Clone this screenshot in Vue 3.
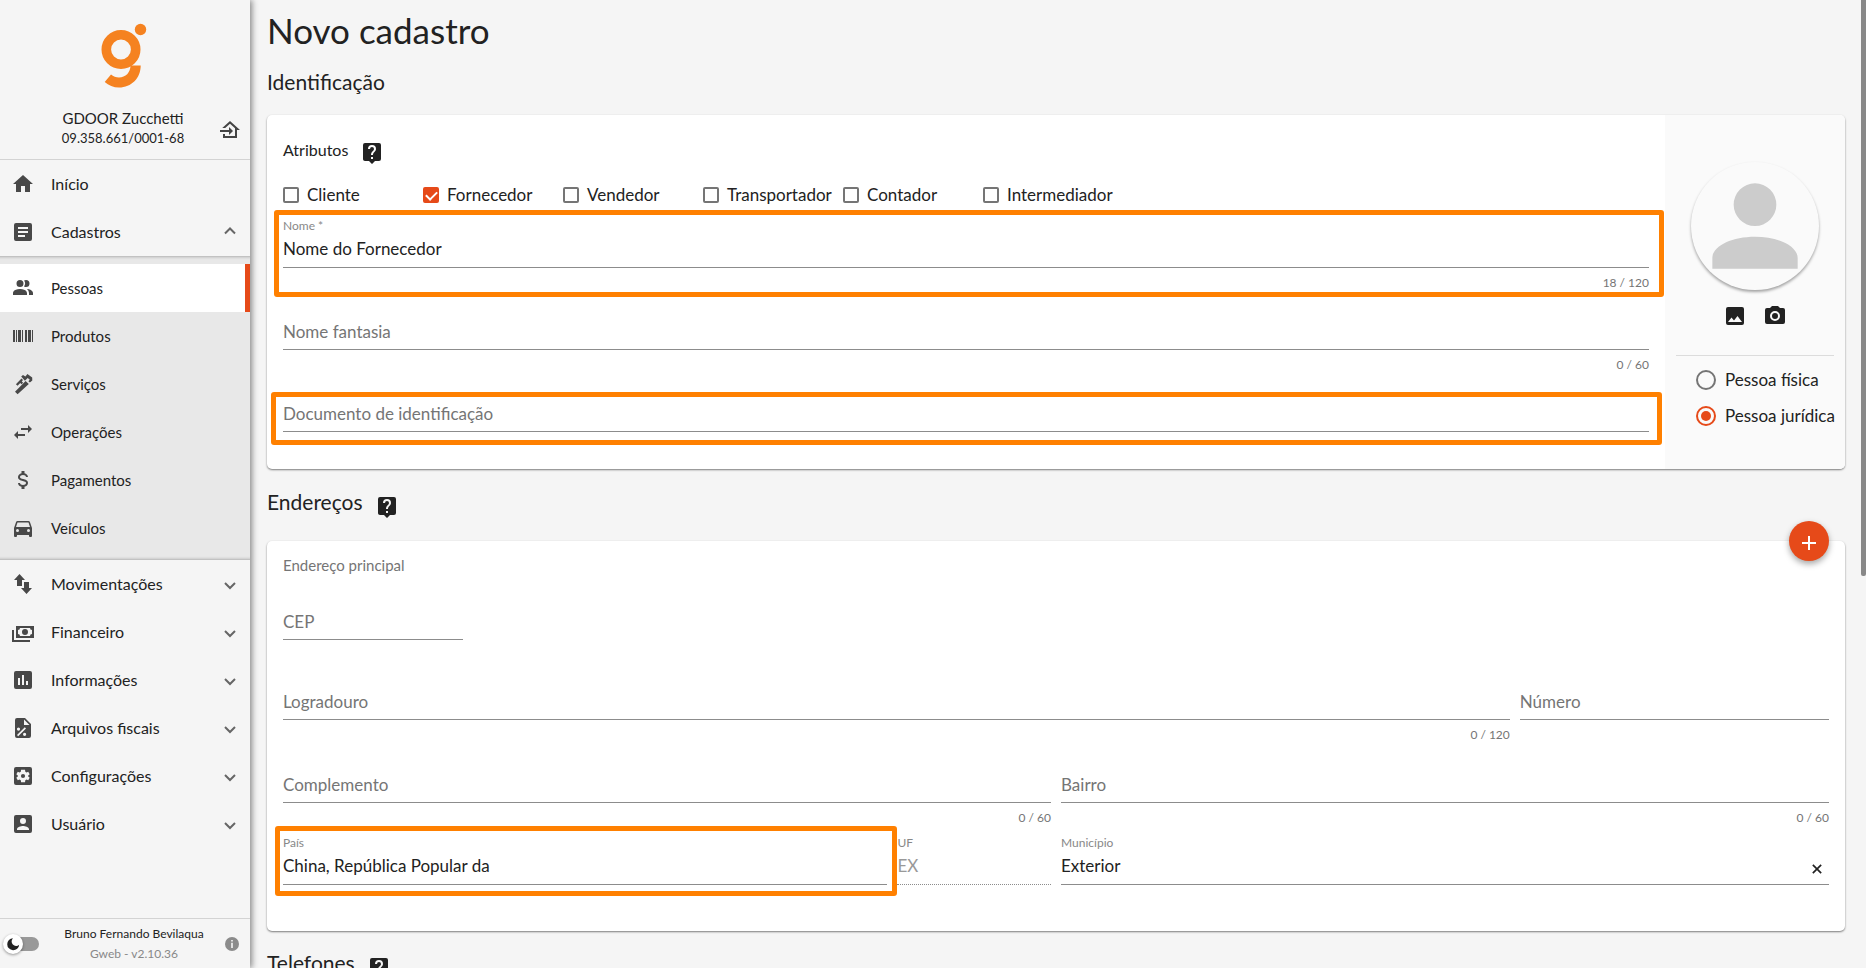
<script setup>
import { reactive, ref } from 'vue'

const box = 'M19 3H5a2 2 0 0 0-2 2v14a2 2 0 0 0 2 2h14a2 2 0 0 0 2-2V5a2 2 0 0 0-2-2z'

const icons = {
  home: 'M10 20v-6h4v6h5v-8h3L12 3 2 12h3v8z',
  text: box + 'M14 17H7v-2h7zM17 13H7v-2h10zM17 9H7V7h10z',
  people: 'M16 17v2H2v-2s0-4 7-4 7 4 7 4M12.5 7.5A3.5 3.5 0 1 0 9 11a3.5 3.5 0 0 0 3.5-3.5M15.94 13A5.32 5.32 0 0 1 18 17v2h4v-2s0-3.63-6.06-4M15 4a3.39 3.39 0 0 0-1.93.59 5 5 0 0 1 0 5.82A3.39 3.39 0 0 0 15 11a3.5 3.5 0 0 0 0-7z',
  barcode: 'M2 6h2v12H2zM5 6h1v12H5zM7 6h3v12H7zM11 6h1v12h-1zM14 6h2v12h-2zM17 6h3v12h-3zM21 6h1v12h-1z',
  wrench: 'M4 19.8 14.6 9l3.2 3.1L6.6 22.2zM4.9 12.2l5.6-5.6 1.5 1.5-1.2 1.3 1.3 1.3-1.6 1.6-1.3-1.3-2.6 2.7zM10.2 4.6l1.8-1.7 2.4 1.7 2-2.6 4.8 3.6.1 3-2.4 2-1.5-1.4 1.4-1.5-2.1-1.6-2.8 2.6z',
  swap: 'M21 9l-4-4v3h-7v2h7v3M7 11l-4 4 4 4v-3h7v-2H7z',
  dollar: 'M7 15h2c0 1.08 1.37 2 3 2s3-.92 3-2c0-1.1-1.04-1.5-3.24-2.03C9.64 12.44 7 11.78 7 9c0-1.79 1.47-3.31 3.5-3.82V3h3v2.18C15.53 5.69 17 7.21 17 9h-2c0-1.08-1.37-2-3-2s-3 .92-3 2c0 1.1 1.04 1.5 3.24 2.03C14.36 11.56 17 12.22 17 15c0 1.79-1.47 3.31-3.5 3.82V21h-3v-2.18C8.47 18.31 7 16.79 7 15z',
  car: 'M5 11l1.5-4.5h11L19 11M17.5 16a1.5 1.5 0 1 1 0-3 1.5 1.5 0 0 1 0 3M6.5 16a1.5 1.5 0 1 1 0-3 1.5 1.5 0 0 1 0 3M18.92 6A1.5 1.5 0 0 0 17.5 5h-11A1.5 1.5 0 0 0 5.08 6L3 12v8a1 1 0 0 0 1 1h1a1 1 0 0 0 1-1v-1h12v1a1 1 0 0 0 1 1h1a1 1 0 0 0 1-1v-8z',
  updown: 'M8.5 2 3 8h3v6h5V8h3zM15.5 22l5.5-6h-3v-6h-5v6h-3z',
  cash: 'M5 6h18v12H5V6M14 9a3 3 0 1 1 0 6 3 3 0 0 1 0-6M9 8a2 2 0 0 1-2 2v4a2 2 0 0 1 2 2h10a2 2 0 0 1 2-2v-4a2 2 0 0 1-2-2H9M1 10h2v10h16v2H1z',
  chart: box + 'M9 17H7v-7h2zM13 17h-2V7h2zM17 17h-2v-4h2z',
  percent: 'M14 2l6 6v12a2 2 0 0 1-2 2H6a2 2 0 0 1-2-2V4a2 2 0 0 1 2-2h8M13 9h5.5L13 3.5zM7.5 11.5a1.6 1.6 0 1 0 0 3.2 1.6 1.6 0 0 0 0-3.2M13.6 16.7a1.6 1.6 0 1 0 0 3.2 1.6 1.6 0 0 0 0-3.2M13.8 11.2l1.2 1.2-7.8 7.8L6 19z',
  cog: box + 'M17.2 12.6l1.5 1.1-1.5 2.6-1.7-.7-1.2.7-.3 1.9h-3.9l-.3-1.9-1.2-.7-1.8.7-1.5-2.6 1.5-1.1v-1.2l-1.5-1.1 1.5-2.6 1.8.7 1.2-.7.3-1.9H14l.3 1.9 1.2.7 1.7-.7 1.5 2.6-1.5 1.1zM12 9.9a2.1 2.1 0 1 0 0 4.2 2.1 2.1 0 0 0 0-4.2',
  user: 'M6 17c0-2 4-3.1 6-3.1s6 1.1 6 3.1v1H6M15 9a3 3 0 1 1-6 0 3 3 0 0 1 6 0M3 5v14a2 2 0 0 0 2 2h14a2 2 0 0 0 2-2V5a2 2 0 0 0-2-2H5a2 2 0 0 0-2 2z',
  enter: 'M15 13l-4-4v3H2v2h9v3M5 20v-4h2v2h10v-7.81l-5-4.5L7.21 10H4.22L12 3l10 9h-3v8z',
  help: 'M19 2H5a2 2 0 0 0-2 2v14c0 1.1.89 2 2 2h4l3 3 3-3h4a2 2 0 0 0 2-2V4a2 2 0 0 0-2-2zm-6 16h-2v-2h2v2zm2.07-7.75l-.9.92C13.45 11.9 13 12.5 13 14h-2v-.5c0-1.1.45-2.1 1.17-2.83l1.24-1.26c.37-.36.59-.86.59-1.41a2 2 0 1 0-4 0H8a4 4 0 1 1 8 0c0 .88-.36 1.68-.93 2.25z',
  person: 'M12 4a4 4 0 1 1 0 8 4 4 0 0 1 0-8M12 14c4.42 0 8 1.79 8 4v2H4v-2c0-2.21 3.58-4 8-4z',
  image: 'M8.5 13.5l2.5 3 3.5-4.5 4.5 6H5M21 19V5a2 2 0 0 0-2-2H5a2 2 0 0 0-2 2v14a2 2 0 0 0 2 2h14a2 2 0 0 0 2-2z',
  camera: 'M4 4h3l2-2h6l2 2h3a2 2 0 0 1 2 2v12a2 2 0 0 1-2 2H4a2 2 0 0 1-2-2V6a2 2 0 0 1 2-2M12 7a5 5 0 1 0 0 10 5 5 0 0 0 0-10M12 9a3 3 0 1 1 0 6 3 3 0 0 1 0-6z'
}

const top = [
  { label: 'Início', icon: 'home' },
  { label: 'Cadastros', icon: 'text', chevron: 'up' }
]
const sub = [
  { label: 'Pessoas', icon: 'people', active: true },
  { label: 'Produtos', icon: 'barcode' },
  { label: 'Serviços', icon: 'wrench' },
  { label: 'Operações', icon: 'swap' },
  { label: 'Pagamentos', icon: 'dollar' },
  { label: 'Veículos', icon: 'car' }
]
const bottom = [
  { label: 'Movimentações', icon: 'updown' },
  { label: 'Financeiro', icon: 'cash' },
  { label: 'Informações', icon: 'chart' },
  { label: 'Arquivos fiscais', icon: 'percent' },
  { label: 'Configurações', icon: 'cog' },
  { label: 'Usuário', icon: 'user' }
]

const attributes = reactive([
  { label: 'Cliente', on: false },
  { label: 'Fornecedor', on: true },
  { label: 'Vendedor', on: false },
  { label: 'Transportador', on: false },
  { label: 'Contador', on: false },
  { label: 'Intermediador', on: false }
])

const form = reactive({
  nome: 'Nome do Fornecedor',
  fantasia: '',
  documento: '',
  cep: '',
  logradouro: '',
  numero: '',
  complemento: '',
  bairro: '',
  pais: 'China, República Popular da',
  uf: 'EX',
  municipio: 'Exterior'
})
const kind = ref('juridica')
const dark = ref(false)
</script>

<template>
  <div class="app">
    <aside class="sidebar">
      <header class="company">
        <svg class="logo" viewBox="0 0 46 66" aria-hidden="true">
          <circle cx="20" cy="26.500" r="14.700" fill="none" stroke="#f58220" stroke-width="9.600" />
          <circle cx="39.500" cy="6.500" r="5.700" fill="#f58220" />
          <path d="M29.500 42.500H39.700C39.700 55 30.500 64.500 18 64.500c-5.500 0-10.500-2-14.300-5.500l6.300-7.500c2.300 2 5 3 8 3 6.500 0 11.500-5 11.500-12z" fill="#f58220" />
        </svg>
        <div class="company-row">
          <div class="company-text">
            <div class="company-name">GDOOR Zucchetti</div>
            <div class="company-id">09.358.661/0001-68</div>
          </div>
          <button class="icon-btn exit" type="button" aria-label="Trocar empresa">
            <svg class="icon" viewBox="0 0 24 24"><path :d="icons.enter" /></svg>
          </button>
        </div>
      </header>

      <nav class="menu">
        <a v-for="i in top" :key="i.label" class="item" href="#">
          <svg class="icon" viewBox="0 0 24 24"><path :d="icons[i.icon]" fill-rule="evenodd" /></svg>
          <span>{{ i.label }}</span>
          <svg v-if="i.chevron" class="chevron" viewBox="0 0 12 12"><path d="M1 7.500l5-5 5 5" /></svg>
        </a>
        <div class="submenu">
          <a v-for="i in sub" :key="i.label" class="item" :class="{ active: i.active }" href="#">
            <svg class="icon" viewBox="0 0 24 24"><path :d="icons[i.icon]" :fill-rule="i.icon === 'wrench' ? 'nonzero' : 'evenodd'" /></svg>
            <span>{{ i.label }}</span>
          </a>
        </div>
        <a v-for="i in bottom" :key="i.label" class="item" href="#">
          <svg class="icon" viewBox="0 0 24 24"><path :d="icons[i.icon]" fill-rule="evenodd" /></svg>
          <span>{{ i.label }}</span>
          <svg class="chevron" viewBox="0 0 12 12"><path d="M1 5l5 5 5-5" /></svg>
        </a>
      </nav>

      <footer class="account">
        <label class="toggle">
          <input v-model="dark" type="checkbox" role="switch" aria-label="Tema escuro" />
          <svg viewBox="0 0 20 20" aria-hidden="true">
            <path d="M10 4.200a6 6 0 1 0 6.200 6.500A4.300 4.300 0 0 1 10 4.200z" fill="#222" />
          </svg>
        </label>
        <div class="account-text">
          <div class="account-name">Bruno Fernando Bevilaqua</div>
          <div class="version">Gweb - v2.10.36</div>
        </div>
        <button class="icon-btn" type="button" aria-label="Informações da versão">
          <svg class="info" viewBox="0 0 14 14">
            <circle cx="7" cy="7" r="7" fill="#8b8b8b" />
            <path d="M6.200 3h1.600v1.600H6.200zM6.200 5.800h1.600V11H6.200z" fill="#f5f5f5" />
          </svg>
        </button>
      </footer>
    </aside>

    <main class="main">
      <h1>Novo cadastro</h1>
      <h2>Identificação</h2>

      <section class="card identity">
        <div class="identity-form">
          <div class="caption">
            <span>Atributos</span>
            <button class="icon-btn" type="button" aria-label="Ajuda sobre atributos">
              <svg class="icon" viewBox="0 0 24 24"><path :d="icons.help" /></svg>
            </button>
          </div>
          <div class="checks">
            <label v-for="a in attributes" :key="a.label" class="check">
              <input v-model="a.on" type="checkbox" />
              <span>{{ a.label }}</span>
            </label>
          </div>

          <div class="field filled">
            <label for="nome">Nome *</label>
            <input id="nome" v-model="form.nome" type="text" />
            <span class="count">{{ form.nome.length }} / 120</span>
            <div class="mark mark-name"></div>
          </div>
          <div class="field">
            <label for="fantasia">Nome fantasia</label>
            <input id="fantasia" v-model="form.fantasia" type="text" />
            <span class="count">0 / 60</span>
          </div>
          <div class="field">
            <label for="documento">Documento de identificação</label>
            <input id="documento" v-model="form.documento" type="text" />
            <div class="mark mark-doc"></div>
          </div>
        </div>

        <div class="profile">
          <div class="avatar">
            <svg viewBox="0 0 24 24" aria-hidden="true"><path :d="icons.person" /></svg>
          </div>
          <div class="photo-actions">
            <button class="icon-btn" type="button" aria-label="Escolher imagem">
              <svg class="icon" viewBox="0 0 24 24"><path :d="icons.image" fill-rule="evenodd" /></svg>
            </button>
            <button class="icon-btn" type="button" aria-label="Tirar foto">
              <svg class="icon" viewBox="0 0 24 24"><path :d="icons.camera" fill-rule="evenodd" /></svg>
            </button>
          </div>
          <div class="kinds">
            <label class="radio"><input v-model="kind" type="radio" value="fisica" /><span>Pessoa física</span></label>
            <label class="radio"><input v-model="kind" type="radio" value="juridica" /><span>Pessoa jurídica</span></label>
          </div>
        </div>
      </section>

      <h2 class="with-help">
        <span>Endereços</span>
        <button class="icon-btn" type="button" aria-label="Ajuda sobre endereços">
          <svg class="icon" viewBox="0 0 24 24"><path :d="icons.help" /></svg>
        </button>
      </h2>

      <section class="card address">
        <button class="fab" type="button" aria-label="Adicionar endereço">
          <svg viewBox="0 0 24 24"><path d="M5 12h14M12 5v14" /></svg>
        </button>
        <p class="subtitle">Endereço principal</p>
        <div class="field cep">
          <label for="cep">CEP</label>
          <input id="cep" v-model="form.cep" type="text" />
        </div>
        <div class="row wide">
          <div class="field">
            <label for="logradouro">Logradouro</label>
            <input id="logradouro" v-model="form.logradouro" type="text" />
            <span class="count">0 / 120</span>
          </div>
          <div class="field">
            <label for="numero">Número</label>
            <input id="numero" v-model="form.numero" type="text" />
          </div>
        </div>
        <div class="row half">
          <div class="field">
            <label for="complemento">Complemento</label>
            <input id="complemento" v-model="form.complemento" type="text" />
            <span class="count">0 / 60</span>
          </div>
          <div class="field">
            <label for="bairro">Bairro</label>
            <input id="bairro" v-model="form.bairro" type="text" />
            <span class="count">0 / 60</span>
          </div>
        </div>
        <div class="row half">
          <div class="row wide">
            <div class="field filled">
              <label for="pais">País</label>
              <input id="pais" v-model="form.pais" type="text" />
              <div class="mark mark-country"></div>
            </div>
            <div class="field filled">
              <label for="uf">UF</label>
              <input id="uf" v-model="form.uf" type="text" disabled />
            </div>
          </div>
          <div class="field filled">
            <label for="municipio">Município</label>
            <input id="municipio" v-model="form.municipio" type="text" />
            <button class="icon-btn clear" type="button" aria-label="Limpar município">
              <svg viewBox="0 0 12 12"><path d="M1 1l10 10M11 1L1 11" /></svg>
            </button>
          </div>
        </div>
      </section>

      <h2 class="with-help phones">
        <span>Telefones</span>
        <button class="icon-btn" type="button" aria-label="Ajuda sobre telefones">
          <svg class="icon" viewBox="0 0 24 24"><path :d="icons.help" /></svg>
        </button>
      </h2>
      <div class="scroll-thumb"></div>
    </main>
  </div>
</template>

<style>
body { margin: 0; background: #f5f5f5; }
</style>

<style scoped>
* { box-sizing: border-box; }
.app {
  display: flex;
  height: 100vh;
  overflow: hidden;
  background: #f5f5f5;
  color: #222;
  font-family: Lato, "Open Sans", sans-serif;
  font-size: 16px;
  line-height: 24px;
}
button, input { font: inherit; color: inherit; margin: 0; }
.icon-btn { display: inline-flex; padding: 0; border: 0; background: none; cursor: pointer; }
.icon { display: block; flex: none; width: 24px; height: 24px; fill: currentColor; }

.sidebar {
  position: relative;
  z-index: 1;
  display: flex;
  flex: none;
  flex-direction: column;
  width: 250px;
  background: #f5f5f5;
  box-shadow: 2px 0 6px rgba(0, 0, 0, .45);
}
.company { height: 160px; padding-top: 23px; border-bottom: 1px solid #d3d3d3; }
.logo { display: block; width: 46px; height: 66px; margin: 0 auto 0 101px; }
.company-row { display: flex; align-items: center; justify-content: flex-end; margin-top: 19px; padding-right: 8px; }
.company-text { flex: 1; padding-left: 28px; text-align: center; line-height: 20px; }
.company-name { font-size: 15px; }
.company-id { font-size: 13px; }
.exit { color: #444; margin-top: 4px; }
.menu { flex: 1; }
.item { display: flex; align-items: center; height: 48px; padding: 0 14px 0 11px; color: #222; font-size: 16px; text-decoration: none; }
.item .icon { margin-right: 16px; fill: #484848; }
.item span { flex: 1; }
.chevron { width: 12px; height: 12px; fill: none; stroke: #666; stroke-width: 2; }
.submenu {
  padding: 8px 0;
  background: #e8e8e8;
  box-shadow: inset 0 5px 3px -4px rgba(0, 0, 0, .25), inset 0 -5px 3px -4px rgba(0, 0, 0, .25);
}
.submenu .item { font-size: 15px; }
.active { background: #fff; border-right: 5px solid #e64a19; }
.account { display: flex; align-items: center; height: 50px; padding: 0 11px 0 3px; border-top: 1px solid #d3d3d3; }
.account-text { flex: 1; padding-left: 4px; text-align: center; font-size: 12px; line-height: 20px; }
.version { color: #888; }
.toggle { position: relative; display: block; width: 36px; height: 20px; }
.toggle input { appearance: none; display: block; width: 30px; height: 14px; margin: 3px 0 0 6px; border-radius: 7px; background: #999; }
.toggle svg { position: absolute; left: 0; top: 0; width: 20px; height: 20px; border-radius: 50%; background: #fff; box-shadow: 0 1px 3px rgba(0, 0, 0, .4); }
.info { width: 14px; height: 14px; }

.main { position: relative; flex: 1; min-width: 0; padding: 0 21px 0 17px; overflow: hidden; }
h1 { margin: 0; padding-top: 10px; font-size: 35px; font-weight: 400; line-height: 40px; }
h2 { display: flex; align-items: center; margin: 0; font-size: 21px; font-weight: 400; line-height: 28px; }
h1 + h2 { margin: 18px 0 19px; }
.with-help { margin: 19px 0 25px; }
.with-help .icon-btn { margin: 7px 0 -3px 12px; }
.card { border-radius: 5px; background: #fff; box-shadow: 0 1px 2px rgba(0, 0, 0, .5); }
.identity { display: flex; min-height: 354px; }
.identity-form { flex: 1; min-width: 0; padding: 22px 16px 0; }
.caption { display: flex; align-items: center; height: 26px; }
.caption .icon-btn { margin: 5px 0 0 12px; }
.checks { display: flex; height: 24px; margin: 20px 0 11px; font-size: 17px; }
.check { display: flex; align-items: center; width: 140px; white-space: nowrap; }
.check input { appearance: none; flex: none; width: 16px; height: 16px; margin-right: 8px; border: 2px solid #757575; border-radius: 2px; }
.check input:checked { display: grid; place-items: start center; border-color: #e64a19; background: #e64a19; }
.check input:checked::after { content: ""; width: 5px; height: 9px; border: solid #fff; border-width: 0 2px 2px 0; transform: rotate(45deg); }

.field {
  position: relative;
  display: grid;
  grid-template-columns: minmax(0, 1fr);
  grid-template-rows: 20px 30px 32px;
}
.field label { grid-area: 2 / 1; color: #757575; font-size: 17px; line-height: 24px; pointer-events: none; z-index: 1; align-self: start; }
.field.filled label { grid-area: 1 / 1; color: #888; font-size: 12px; line-height: 16px; }
.field input { grid-area: 2 / 1; width: 100%; height: 30px; padding: 0 0 8px; border: 0; border-bottom: 1px solid #8c8c8c; border-radius: 0; background: none; outline: 0; font-size: 17px; }
.field input:disabled { color: #999; border-bottom-style: dotted; }
.count { grid-area: 3 / 1; justify-self: end; margin-top: 7px; color: #757575; font-size: 12px; line-height: 16px; }
.mark { position: absolute; z-index: 2; border: 5px solid #ff8000; border-radius: 3px; pointer-events: none; }
.mark-name { inset: -8px -15px 3px -9px; }
.mark-doc { inset: 10px -13px 19px -12px; }
.mark-country { inset: -9px -10px 21px -8px; }

.profile { width: 180px; padding: 47px 11px 0; background: #fafafa; border-radius: 0 5px 5px 0; }
.avatar { width: 128px; height: 128px; margin: 0 auto; border-radius: 50%; box-shadow: 0 2px 3px rgba(0, 0, 0, .35); }
.avatar svg { display: block; fill: #ccc; }
.photo-actions { display: flex; justify-content: center; gap: 16px; height: 65px; padding-top: 14px; }
.kinds { padding: 6px 0 0 20px; border-top: 1px solid #dcdcdc; font-size: 17px; }
.radio { display: flex; align-items: center; height: 36px; white-space: nowrap; }
.radio input { appearance: none; flex: none; display: grid; place-items: center; width: 20px; height: 20px; margin-right: 9px; border: 2px solid #757575; border-radius: 50%; }
.radio input:checked { border-color: #e64a19; }
.radio input:checked::after { content: ""; width: 10px; height: 10px; border-radius: 50%; background: #e64a19; }

.address { position: relative; padding: 14px 16px 14px; }
.fab { position: absolute; right: 16px; top: -20px; display: grid; place-items: center; width: 40px; height: 40px; padding: 4px 0 0; border: 0; border-radius: 50%; background: #e64a19; box-shadow: 0 3px 6px rgba(0, 0, 0, .35); }
.fab svg { width: 24px; height: 24px; fill: none; stroke: #fff; stroke-width: 2; }
.subtitle { margin: 0; color: #757575; font-size: 15px; line-height: 20px; }
.cep { width: 180px; grid-template-rows: 20px 30px 30px; margin-top: 15px; }
.row { display: grid; column-gap: 10px; }
.wide { grid-template-columns: calc(80% - 10px) minmax(0, 1fr); }
.half { grid-template-columns: repeat(2, minmax(0, 1fr)); }
.wide + .half { padding-top: 1px; }
.clear { grid-area: 2 / 1; justify-self: end; align-self: start; margin: 9px 7px 0 0; }
.clear svg { width: 10px; height: 10px; stroke: #222; stroke-width: 2; }
.phones { margin: 18px 0 0; }
.scroll-thumb { position: absolute; right: 0; top: 0; width: 5px; height: 576px; border-radius: 0 0 2px 2px; background: #888; }
</style>
